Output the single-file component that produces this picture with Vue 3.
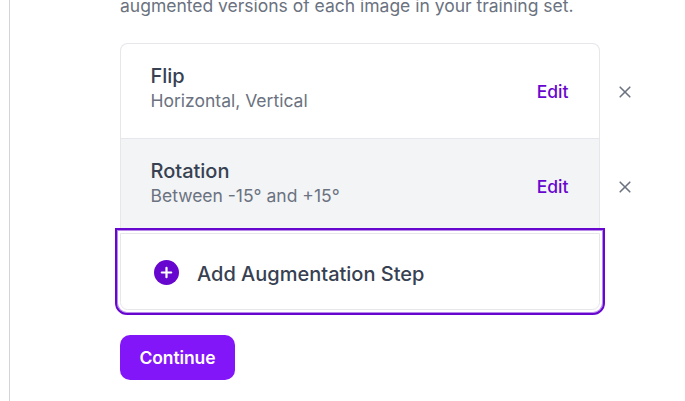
<script setup>
const steps = [
  { name: 'Flip', detail: 'Horizontal, Vertical' },
  { name: 'Rotation', detail: 'Between -15° and +15°' }
]
</script>

<template>
  <div class="page">
    <main class="content">
      <p class="intro">augmented versions of each image in your training set.</p>
      <section class="steps">
        <div v-for="step in steps" :key="step.name" class="row">
          <div class="step">
            <div class="text">
              <div class="name">{{ step.name }}</div>
              <div class="detail">{{ step.detail }}</div>
            </div>
            <button class="edit">Edit</button>
          </div>
          <button class="remove" aria-label="Remove">
            <svg width="12" height="12" viewBox="0 0 12 12">
              <path d="M1.2 1.2 10.8 10.8M10.8 1.2 1.2 10.8" fill="none" stroke="#6b7280" stroke-width="1.6" stroke-linecap="round" />
            </svg>
          </button>
        </div>
      </section>
      <div class="ring">
        <button class="add">
          <svg width="26" height="26" viewBox="0 0 26 26">
            <circle cx="13.5" cy="12.5" r="12.5" fill="#6706ce" />
            <path d="M13.5 7.8v9.4M8.8 12.5h9.4" stroke="#fff" stroke-width="2.2" stroke-linecap="round" />
          </svg>
          <span class="label">Add Augmentation Step</span>
        </button>
      </div>
      <button class="continue">Continue</button>
    </main>
  </div>
</template>

<style>
body {
  background: #fff;
}
</style>

<style scoped>
.page {
  box-sizing: border-box;
  height: 401px;
  margin-left: 9px;
  padding-left: 110px;
  border-left: 1px solid #d1d5db;
  overflow: hidden;
  font-family: Inter, sans-serif;
  font-size: 17.5px;
  color: #6b7280;
}
button {
  font: inherit;
  border: 0;
  padding: 0;
  background: none;
}
.content {
  width: 565px;
}
.intro {
  height: 25px;
  line-height: 25px;
  margin: -7px 0 25px;
  letter-spacing: -0.01px;
  white-space: nowrap;
}
.steps {
  height: 185px;
}
.row {
  display: flex;
  align-items: center;
}
.step {
  box-sizing: border-box;
  display: flex;
  align-items: center;
  justify-content: space-between;
  width: 480px;
  height: 95px;
  padding: 1px 30.5px 0 29.5px;
  border: 1px solid #e5e7eb;
  border-bottom: 0;
}
.row:first-child .step {
  border-radius: 7.5px 7.5px 0 0;
}
.row:last-child .step {
  height: 90px;
  padding-top: 6px;
  background: #f3f4f6;
}
.text {
  padding-bottom: 7px;
}
.name {
  font-size: 20px;
  line-height: 27px;
  color: #374151;
  font-weight: 500;
}
.detail {
  margin-top: -2px;
  line-height: 25px;
}
.edit {
  line-height: 25px;
  font-weight: 500;
  color: #6706ce;
}
.remove {
  display: flex;
  margin: 2px 0 0 19px;
}
.row:last-child .remove {
  margin-top: 7px;
}
.ring {
  box-sizing: border-box;
  width: 490px;
  height: 87px;
  margin-left: -5px;
  padding: 3px;
  border: 2px solid #6706ce;
  border-radius: 0 0 12px 12px;
  box-shadow: inset 0 0 0 1px #b98be8;
}
.add {
  box-sizing: border-box;
  display: flex;
  align-items: center;
  gap: 18px;
  width: 480px;
  height: 77px;
  padding: 2px 32px 0;
  border: 1px solid #e5e7eb;
  border-radius: 0 0 7.5px 7.5px;
  font-size: 20px;
  font-weight: 500;
  color: #374151;
}
.label {
  padding-top: 2px;
}
.continue {
  display: block;
  width: 115px;
  height: 45px;
  margin-top: 20px;
  border-radius: 10px;
  background: #8315f9;
  color: #fff;
  font-weight: 600;
  letter-spacing: -0.1px;
}
</style>
